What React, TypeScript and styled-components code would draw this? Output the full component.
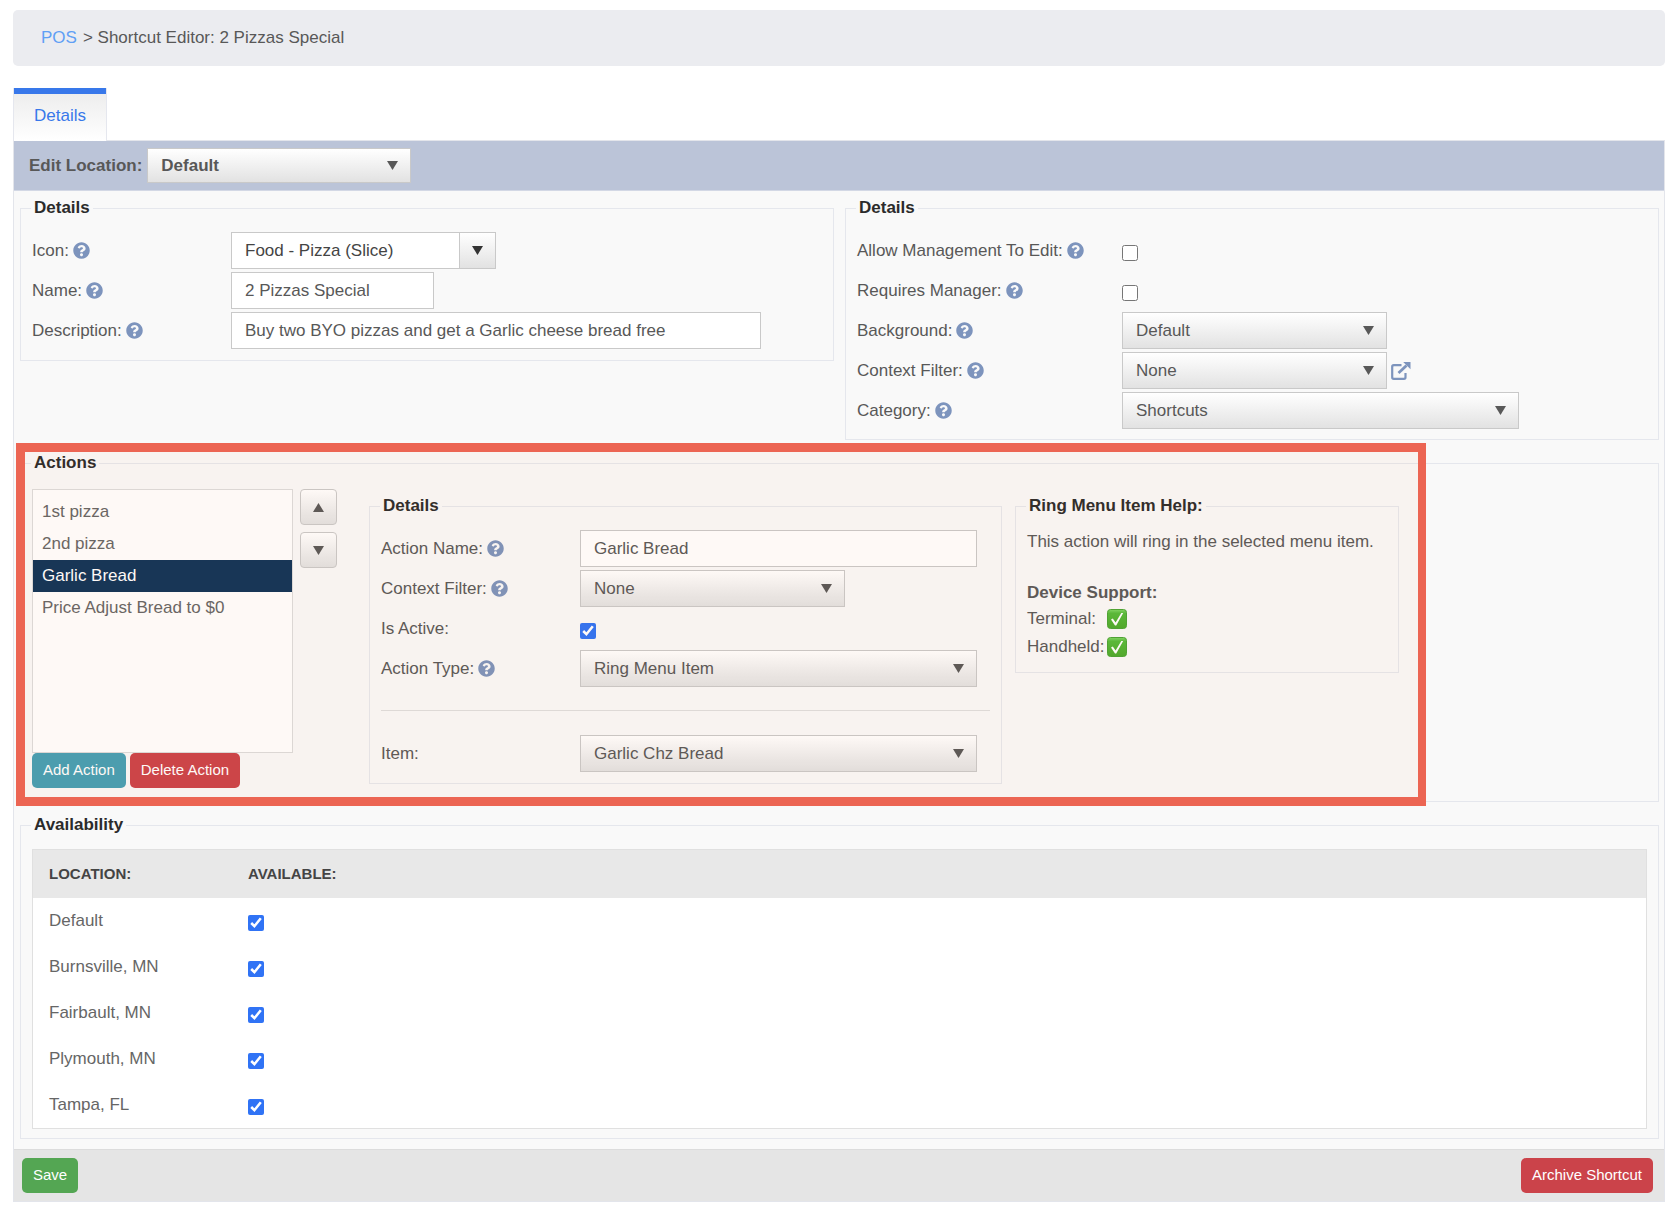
import React, { useState } from "react";
import styled, { createGlobalStyle, css } from "styled-components";
import { FaQuestionCircle } from "react-icons/fa";

const GlobalStyle = createGlobalStyle`
  *, *::before, *::after { box-sizing: border-box; }
  body {
    margin: 0;
    background: #fff;
    color: #585858;
    font-family: "Liberation Sans", Arial, Helvetica, sans-serif;
    font-size: 17px;
    line-height: 20px;
  }
  button, input, select { font: inherit; color: inherit; margin: 0; }
`;

const Page = styled.div`
  padding: 10px 15px 20px 13px;
`;

const Breadcrumb = styled.nav`
  display: flex;
  align-items: center;
  gap: 6px;
  height: 56px;
  margin-bottom: 22px;
  padding: 0 28px;
  border-radius: 5px;
  background: #ebecf0;
`;

const CrumbLink = styled.a`
  color: #609ff5;
  text-decoration: none;
`;

const Tabs = styled.div`
  display: flex;
`;

const Tab = styled.button`
  position: relative;
  z-index: 1;
  margin-bottom: -1px;
  padding: 18px 20px 15px;
  border: solid #e5e7ee;
  border-width: 0 1px;
  background: linear-gradient(#3878ea, #3878ea) top / 100% 6px no-repeat,
    linear-gradient(#ebebeb, #fff);
  color: #3878ea;
`;

const Panel = styled.main`
  border: 1px solid #e3e5eb;
  background: #f9f9f9;
`;

const LocationBar = styled.div`
  display: flex;
  align-items: center;
  gap: 5px;
  padding: 7px 15px;
  border-bottom: 1px solid #d3d8e5;
  background: #bbc4d8;
  font-weight: bold;
`;

const Content = styled.div`
  display: flex;
  flex-direction: column;
  gap: 13px;
  padding: 7px 5px 10px 6px;
`;

const Columns = styled.div`
  display: grid;
  grid-template-columns: 1fr 1fr;
  align-items: start;
  gap: 11px;
`;

const Group = styled.fieldset<{ $top?: number; $bottom?: number }>`
  min-width: 0;
  margin: 0;
  padding: ${(p) => p.$top ?? 14}px 11px ${(p) => p.$bottom ?? 11}px;
  border: 1px solid #e5e7ed;
`;

const Legend = styled.legend`
  margin-left: -1px;
  padding: 0 3px;
  color: #2b2b2b;
  font-weight: bold;
`;

const Rows = styled.div`
  display: flex;
  flex-direction: column;
  gap: 3px;
`;

const Row = styled.div<{ $label: number }>`
  display: grid;
  grid-template-columns: ${(p) => p.$label}px 1fr;
  align-items: center;
  min-height: 37px;
`;

const LabelCell = styled.div`
  display: flex;
  align-items: center;
  gap: 4px;
`;

const HelpButton = styled.button`
  display: flex;
  padding: 0;
  border: 0;
  background: none;
  color: #7d94bd;
`;

const Control = styled.div`
  display: flex;
  align-items: center;
  gap: 4px;
`;

const boxed = css`
  height: 37px;
  padding: 0 13px;
  border: 1px solid #c9c9c9;
  border-radius: 0;
`;

const TextInput = styled.input<{ $width: number }>`
  ${boxed}
  width: ${(p) => p.$width}px;
  background: #fff;
`;

const SelectBox = styled.span<{ $width: number }>`
  display: inline-grid;
  align-items: center;
  width: ${(p) => p.$width}px;

  > select,
  > svg {
    grid-area: 1 / 1;
  }
  > svg {
    justify-self: end;
    margin-right: 13px;
    pointer-events: none;
  }
`;

const NativeSelect = styled.select<{ $compact?: boolean }>`
  ${boxed}
  width: 100%;
  height: ${(p) => (p.$compact ? 35 : 37)}px;
  appearance: none;
  background: linear-gradient(#fff, #e2e2e2);
`;

const Combo = styled.div`
  display: flex;
  width: 265px;
  height: 37px;
  border: 1px solid #c9c9c9;
  background: #fff;
`;

const ComboInput = styled.input`
  flex: 1;
  min-width: 0;
  padding: 0 13px;
  border: 0;
  background: none;
  color: #444;
`;

const ComboButton = styled.button`
  display: grid;
  place-items: center;
  width: 36px;
  padding: 0;
  border: 0;
  border-left: 1px solid #c9c9c9;
  background: linear-gradient(#fff, #e2e2e2);
  color: #333;
`;

const Checkbox = styled.input.attrs({ type: "checkbox" })`
  display: block;
  width: 16px;
  height: 16px;
  margin-top: 4px;
  accent-color: #3073f5;
`;

const IconLink = styled.a`
  display: flex;
  color: #7d94bd;
`;

const ActionsSection = styled.section`
  position: relative;
`;

const Highlight = styled.div`
  position: absolute;
  top: -10px;
  bottom: -4px;
  left: -4px;
  width: 1410px;
  border: solid #ec6553;
  border-width: 9px 8px 9px 9px;
  background: rgba(236, 120, 50, 0.045);
  pointer-events: none;
`;

const ActionsLayout = styled.div`
  display: flex;
  align-items: flex-start;
`;

const ActionsColumn = styled.div`
  flex: none;
  width: 261px;
`;

const ActionList = styled.ul`
  height: 264px;
  margin: 0;
  padding: 6px 0;
  border: 1px solid #dcdcdc;
  background: #fff;
  list-style: none;
`;

const ActionItem = styled.li<{ $selected: boolean }>`
  padding: 6px 9px;
  background: ${(p) => (p.$selected ? "#0f3458" : "transparent")};
  color: ${(p) => (p.$selected ? "#fff" : "#666")};
  cursor: default;
`;

const ButtonRow = styled.div`
  display: flex;
  gap: 4px;
`;

const tones = { teal: "#459fb4", red: "#cb434a", green: "#54a653" };

const Button = styled.button<{ $tone: keyof typeof tones }>`
  height: 35px;
  padding: 0 11px 1px;
  border: 0;
  border-radius: 5px;
  background: ${(p) => tones[p.$tone]};
  color: #fff;
  font-size: 15px;
  white-space: nowrap;
`;

const OrderButtons = styled.div`
  display: flex;
  flex-direction: column;
  gap: 7px;
  margin: 0 32px 0 7px;
`;

const OrderButton = styled.button`
  display: grid;
  place-items: center;
  width: 37px;
  height: 36px;
  padding: 0;
  border: 1px solid #c9c9c9;
  border-radius: 4px;
  background: linear-gradient(#fff, #e2e2e2);
`;

const ActionPanels = styled.div`
  display: grid;
  grid-template-columns: 633px 384px;
  align-items: start;
  gap: 13px;
  padding: 7px 0 6px;
`;

const Divider = styled.hr`
  width: 100%;
  margin: 20px 0 21px;
  border: 0;
  border-top: 1px solid #dedede;
`;

const HelpText = styled.p`
  margin: 0 0 27px;
  line-height: 24px;
`;

const HelpHeading = styled.h3`
  margin: 0;
  font-size: 17px;
  line-height: 24px;
`;

const Devices = styled.dl`
  display: grid;
  grid-template-columns: 80px 1fr;
  grid-auto-rows: 28px;
  align-items: center;
  margin: 0;

  dd {
    display: flex;
    margin: 0;
  }
`;

const Table = styled.table`
  width: 100%;
  border: 1px solid #e0e0e0;
  border-collapse: separate;
  border-spacing: 0;
  background: #fff;
  table-layout: fixed;
`;

const HeadCell = styled.th<{ $width?: number }>`
  width: ${(p) => (p.$width ? `${p.$width}px` : "auto")};
  height: 48px;
  padding: 0 16px;
  background: #e8e8e8;
  color: #444;
  font-size: 15px;
  text-align: left;
`;

const Cell = styled.td`
  height: 46px;
  padding: 0 16px;
  color: #666;
`;

const Footer = styled.footer`
  display: flex;
  justify-content: space-between;
  padding: 8px 11px 8px 8px;
  border-top: 1px solid #dcdcdc;
  background: #e5e5e5;
`;

const Triangle = ({ up }: { up?: boolean }) => (
  <svg width="11" height="9" viewBox="0 0 11 9" fill="currentColor" aria-hidden="true">
    <path d={up ? "M5.5 0 11 9H0z" : "M0 0h11L5.5 9z"} />
  </svg>
);

const ExternalIcon = () => (
  <svg width="20" height="18" viewBox="0 0 20 18" fill="none" stroke="currentColor" aria-hidden="true">
    <path
      d="M10.500 3.200H2.700Q1.200 3.200 1.200 4.700V15.300Q1.200 16.800 2.700 16.800H13Q14.500 16.800 14.500 15.300V11"
      strokeWidth="2.200"
    />
    <path d="M7.500 11 15.500 3.500" strokeWidth="2.800" />
    <path d="M12.200 0H19.500v7.300z" fill="currentColor" stroke="none" />
  </svg>
);

const GreenCheck = () => (
  <svg width="20" height="20" viewBox="0 0 20 20" role="img" aria-label="Supported">
    <defs>
      <linearGradient id="green" x1="0" y1="0" x2="0" y2="1">
        <stop offset="0" stopColor="#7fd866" />
        <stop offset="0.2" stopColor="#55bb3a" />
        <stop offset="1" stopColor="#4caa2c" />
      </linearGradient>
    </defs>
    <rect x="0.500" y="0.500" width="19" height="19" rx="3" fill="url(#green)" stroke="#4aa535" />
    <path d="M4 10.500 5.800 9.500 8.600 13.500 14.300 4H16.200L9.200 16.500H8z" fill="#fff" />
  </svg>
);

type FieldProps = {
  id: string;
  label: string;
  help?: boolean;
  labelWidth: number;
  children: React.ReactNode;
};

const Field = ({ id, label, help, labelWidth, children }: FieldProps) => (
  <Row $label={labelWidth}>
    <LabelCell>
      <label htmlFor={id}>{label}</label>
      {help && (
        <HelpButton type="button" aria-label={`Help: ${label}`}>
          <FaQuestionCircle size={17} />
        </HelpButton>
      )}
    </LabelCell>
    <Control>{children}</Control>
  </Row>
);

type SelectProps = { id: string; width: number; options: string[]; compact?: boolean };

const Select = ({ id, width, options, compact }: SelectProps) => (
  <SelectBox $width={width}>
    <NativeSelect id={id} $compact={compact} defaultValue={options[0]}>
      {options.map((option) => (
        <option key={option}>{option}</option>
      ))}
    </NativeSelect>
    <Triangle />
  </SelectBox>
);

const actions = ["1st pizza", "2nd pizza", "Garlic Bread", "Price Adjust Bread to $0"];
const locations = ["Default", "Burnsville, MN", "Fairbault, MN", "Plymouth, MN", "Tampa, FL"];

export default function App() {
  const [selected, setSelected] = useState("Garlic Bread");

  return (
    <Page>
      <GlobalStyle />
      <Breadcrumb aria-label="Breadcrumb">
        <CrumbLink href="#pos">POS</CrumbLink>
        <span>&gt; Shortcut Editor: 2 Pizzas Special</span>
      </Breadcrumb>

      <Tabs role="tablist">
        <Tab type="button" role="tab" aria-selected="true">
          Details
        </Tab>
      </Tabs>

      <Panel>
        <LocationBar>
          <label htmlFor="location">Edit Location:</label>
          <Select id="location" width={264} options={["Default"]} compact />
        </LocationBar>

        <Content>
          <Columns>
            <Group>
              <Legend>Details</Legend>
              <Rows>
                <Field id="icon" label="Icon:" help labelWidth={199}>
                  <Combo>
                    <ComboInput id="icon" defaultValue="Food - Pizza (Slice)" />
                    <ComboButton type="button" aria-label="Show icons">
                      <Triangle />
                    </ComboButton>
                  </Combo>
                </Field>
                <Field id="name" label="Name:" help labelWidth={199}>
                  <TextInput id="name" $width={203} defaultValue="2 Pizzas Special" />
                </Field>
                <Field id="description" label="Description:" help labelWidth={199}>
                  <TextInput
                    id="description"
                    $width={530}
                    defaultValue="Buy two BYO pizzas and get a Garlic cheese bread free"
                  />
                </Field>
              </Rows>
            </Group>

            <Group $bottom={10}>
              <Legend>Details</Legend>
              <Rows>
                <Field id="allow" label="Allow Management To Edit:" help labelWidth={265}>
                  <Checkbox id="allow" />
                </Field>
                <Field id="manager" label="Requires Manager:" help labelWidth={265}>
                  <Checkbox id="manager" />
                </Field>
                <Field id="background" label="Background:" help labelWidth={265}>
                  <Select id="background" width={265} options={["Default"]} />
                </Field>
                <Field id="filter" label="Context Filter:" help labelWidth={265}>
                  <Select id="filter" width={265} options={["None"]} />
                  <IconLink href="#filters" aria-label="Open context filters">
                    <ExternalIcon />
                  </IconLink>
                </Field>
                <Field id="category" label="Category:" help labelWidth={265}>
                  <Select id="category" width={397} options={["Shortcuts"]} />
                </Field>
              </Rows>
            </Group>
          </Columns>

          <ActionsSection>
            <Group $top={16}>
              <Legend>Actions</Legend>
              <ActionsLayout>
                <ActionsColumn>
                  <ActionList role="listbox" aria-label="Actions">
                    {actions.map((action) => (
                      <ActionItem
                        key={action}
                        role="option"
                        aria-selected={action === selected}
                        $selected={action === selected}
                        onClick={() => setSelected(action)}
                      >
                        {action}
                      </ActionItem>
                    ))}
                  </ActionList>
                  <ButtonRow>
                    <Button type="button" $tone="teal">Add Action</Button>
                    <Button type="button" $tone="red">Delete Action</Button>
                  </ButtonRow>
                </ActionsColumn>

                <OrderButtons>
                  <OrderButton type="button" aria-label="Move up">
                    <Triangle up />
                  </OrderButton>
                  <OrderButton type="button" aria-label="Move down">
                    <Triangle />
                  </OrderButton>
                </OrderButtons>

                <ActionPanels>
                  <Group>
                    <Legend>Details</Legend>
                    <Rows>
                      <Field id="action-name" label="Action Name:" help labelWidth={199}>
                        <TextInput id="action-name" $width={397} defaultValue="Garlic Bread" />
                      </Field>
                      <Field id="action-filter" label="Context Filter:" help labelWidth={199}>
                        <Select id="action-filter" width={265} options={["None"]} />
                      </Field>
                      <Field id="active" label="Is Active:" labelWidth={199}>
                        <Checkbox id="active" defaultChecked />
                      </Field>
                      <Field id="action-type" label="Action Type:" help labelWidth={199}>
                        <Select id="action-type" width={397} options={["Ring Menu Item"]} />
                      </Field>
                      <Divider />
                      <Field id="item" label="Item:" labelWidth={199}>
                        <Select id="item" width={397} options={["Garlic Chz Bread"]} />
                      </Field>
                    </Rows>
                  </Group>

                  <Group>
                    <Legend>Ring Menu Item Help:</Legend>
                    <HelpText>This action will ring in the selected menu item.</HelpText>
                    <HelpHeading>Device Support:</HelpHeading>
                    <Devices>
                      <dt>Terminal:</dt>
                      <dd><GreenCheck /></dd>
                      <dt>Handheld:</dt>
                      <dd><GreenCheck /></dd>
                    </Devices>
                  </Group>
                </ActionPanels>
              </ActionsLayout>
            </Group>
            <Highlight />
          </ActionsSection>

          <Group $top={14} $bottom={9}>
            <Legend>Availability</Legend>
            <Table>
              <thead>
                <tr>
                  <HeadCell $width={199}>LOCATION:</HeadCell>
                  <HeadCell>AVAILABLE:</HeadCell>
                </tr>
              </thead>
              <tbody>
                {locations.map((location, index) => (
                  <tr key={location}>
                    <Cell>
                      <label htmlFor={`available-${index}`}>{location}</label>
                    </Cell>
                    <Cell>
                      <Checkbox id={`available-${index}`} defaultChecked />
                    </Cell>
                  </tr>
                ))}
              </tbody>
            </Table>
          </Group>
        </Content>

        <Footer>
          <Button type="button" $tone="green">Save</Button>
          <Button type="button" $tone="red">Archive Shortcut</Button>
        </Footer>
      </Panel>
    </Page>
  );
}
